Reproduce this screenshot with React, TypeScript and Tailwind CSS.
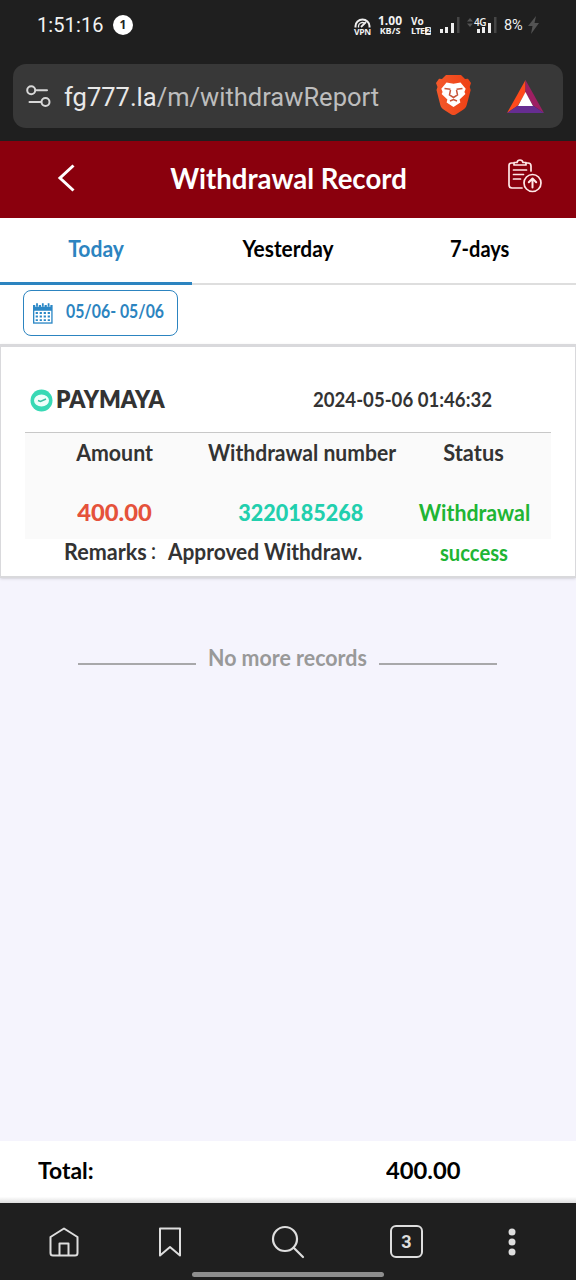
import { useState } from 'react';
import type { ReactNode } from 'react';

const tabs = [
  { label: 'Today', fit: 'scale-x-[0.96]' },
  { label: 'Yesterday', fit: 'scale-x-[0.95]' },
  { label: '7-days', fit: 'scale-x-[0.91]' },
];

const Fit = ({ className = '', children }: { className?: string; children: ReactNode }) => (
  <span className={`inline-block whitespace-nowrap ${className}`}>{children}</span>
);

const Signal = () => (
  <svg width="22" height="18" viewBox="0 0 22 18">
    <rect x="1" y="13" width="3" height="4" fill="#eee" />
    <rect x="6" y="11" width="3" height="6" fill="#eee" />
    <rect x="12" y="7" width="3" height="10" fill="#eee" />
    <rect x="18" y="1" width="2.5" height="16" fill="#464646" />
  </svg>
);

const StatusBar = () => (
  <div className="flex h-[50px] items-center text-[#f2f2f2]">
    <span className="ml-[37px] w-[68px] text-[20px] tracking-[0.1px] whitespace-nowrap font-['Roboto',sans-serif]">
      1:51:16
    </span>
    <span className="ml-[8px] flex size-5 items-center justify-center rounded-full bg-white text-[12px] font-bold text-[#222]">1</span>
    <div className="ml-[221px] flex w-[17px] flex-col items-center pt-[3px]">
      <svg width="17" height="10" viewBox="0 0 17 10" fill="none" stroke="#eee" strokeWidth="2">
        <path d="M1.5 9.5V8a7 6.5 0 0 1 14 0v1.5" />
        <path d="M4.5 9.5V8a4 3.6 0 0 1 6-3" strokeWidth="1.3" />
        <path d="M7 9l5-5" strokeWidth="1.8" />
      </svg>
      <span className="text-[8.5px] font-bold leading-[8px] tracking-[-0.3px]">VPN</span>
    </div>
    <div className="ml-[6px] flex w-[26px] flex-col items-center font-bold">
      <span className="text-[12px] leading-[11px]">1.00</span>
      <span className="text-[9px] leading-[9px] whitespace-nowrap">KB/S</span>
    </div>
    <div className="ml-[8px] flex w-[20px] flex-col pt-[2px] font-bold">
      <span className="text-[10px] leading-[9px]">Vo</span>
      <span className="flex items-center text-[9px] leading-[9px] tracking-[-0.7px]">
        LTE
        <span className="ml-[1px] flex h-[8px] w-[6px] items-center justify-center rounded-[1px] bg-[#eee] text-[7px] leading-none text-[#222]">2</span>
      </span>
    </div>
    <div className="ml-[8px]"><Signal /></div>
    <div className="relative ml-[15px]">
      <Signal />
      <span className="absolute left-[-2px] top-[1px] bg-[#1f1f1f] text-[10px] font-semibold leading-[10px] tracking-[-0.5px]">4G</span>
      <svg className="absolute left-[-9px] top-[2px]" width="6" height="9" viewBox="0 0 6 9" fill="#555">
        <path d="M0 3.5 3 0l3 3.500zM0 5.500 3 9l3-3.500z" />
      </svg>
    </div>
    <span className="ml-[6px] w-[20px] pt-[1px] text-[14.5px] tracking-[-0.2px] font-['Roboto',sans-serif]">8%</span>
    <svg className="ml-[4px]" width="11" height="18" viewBox="0 0 11 18" fill="#535353">
      <path d="M8 0 0 10h4.500L3 18l8-11H6.500z" />
    </svg>
  </div>
);

const BraveLogo = () => (
  <svg width="35" height="41" viewBox="0 0 35 41">
    <defs>
      <linearGradient id="brave">
        <stop offset="0" stopColor="#f4592b" />
        <stop offset="1" stopColor="#ee4014" />
      </linearGradient>
    </defs>
    <path d="M10 1h15l4 4 3-.3 3 4.300-1.300 4 1 3-4 15c-.8 2.600-2 3.600-4 5l-7 4.500q-2.200 1.200-4.400 0l-7-4.500c-2-1.400-3.200-2.400-4-5L.5 16l1-3L0 9l3-4.300L6 5z" fill="url(#brave)" />
    <path d="m10.500 8.500 7 1.300 7-1.300 5.200 6.200-1.300 3.300 1 2-5.800 5.400.8 3-6.900 4.700-6.900-4.700.8-3L5.600 20l1-2-1.300-3.300z" fill="#fff" />
    <path d="M8.500 14.500l6 .7M26.500 14.500l-6 .7M14.500 16l-1 5 4 2.500 4-2.500-1-5M14 27l3.500-1.500L21 27" fill="none" stroke="#c9563a" strokeWidth="1.500" />
  </svg>
);

const BatLogo = () => (
  <svg width="37" height="33" viewBox="0 0 37 33">
    <path d="M18.500 0 0 33l11-7.500 7.500-13z" fill="#ff4a1c" />
    <path d="M18.500 0 37 33l-11-7.500-7.500-13z" fill="#9e1f63" />
    <path d="M0 33h37l-11-7.500H11z" fill="#662d91" />
    <path d="M18.500 12 11 26h15z" fill="#fff" />
  </svg>
);

const AddressBar = () => (
  <div className="mx-[13px] mt-[14px] flex h-16 items-center rounded-[13px] bg-[#383838]">
    <svg className="ml-[13px]" width="25" height="24" viewBox="0 0 25 24" fill="none" stroke="#d8d8d8" strokeWidth="2" strokeLinecap="round">
      <circle cx="5.200" cy="6.200" r="4" />
      <path d="M10 6.200h11M3.500 18h11" />
      <circle cx="19.500" cy="18" r="4" />
    </svg>
    <span className="ml-[13px] w-[316px] pt-[3px] text-[25.500px] whitespace-nowrap text-[#bdbdbd] font-['Roboto',sans-serif]">
      <span className="text-[#e8e8e8]">fg777.la</span>/m/withdrawReport
    </span>
    <div className="ml-[56px] pb-[3px]"><BraveLogo /></div>
    <div className="ml-[36px]"><BatLogo /></div>
  </div>
);

const PageHeader = () => (
  <div className="flex h-[77px] items-center bg-[#8a000d] pb-[4px] text-white">
    <button className="ml-[57px]">
      <svg width="20" height="28" viewBox="0 0 20 28" fill="none" stroke="white" strokeWidth="3">
        <path d="M16.500 1.500 3 14l13.500 12.500" />
      </svg>
    </button>
    <h1 className="ml-[77px] flex w-[268px] justify-center text-[29px] font-bold">
      <Fit className="scale-x-[0.95]">Withdrawal Record</Fit>
    </h1>
    <button className="ml-[85px] pb-[3px]">
      <svg width="36" height="36" viewBox="0 0 36 36" fill="none" stroke="#ffe8e8" strokeWidth="1.700" strokeLinecap="round" strokeLinejoin="round">
        <path d="M6 5H4.500Q2 5 2 7.500V27q0 3 3 3h10M19 5h2q3 0 3 3v5" />
        <path d="M7 7V4.500h3Q10.500 2 13 2t3 2.500h3V7z" />
        <path d="M6.500 12h13M6.500 16.500h10M6.500 21h7" />
        <circle cx="25.500" cy="25" r="8.500" />
        <path d="M25.500 29.500V21M21.800 24.300l3.700-3.800 3.700 3.800" strokeWidth="2" />
      </svg>
    </button>
  </div>
);

const CalendarIcon = () => (
  <svg width="22" height="24" viewBox="0 0 22 24">
    <path d="M0 3h22v21H0z" fill="#2c88c6" />
    <path d="M1.500 9.500h19v13h-19z" fill="#fff" />
    <path d="M4.500 1v4M11 1v4M17.500 1v4" fill="none" stroke="#fff" strokeWidth="4" />
    <path d="M4.500 1v4M11 1v4M17.500 1v4" fill="none" stroke="#2c88c6" strokeWidth="2" />
    <path d="M3 12h16M3 16h16M3 20h16" stroke="#2c88c6" strokeWidth="2.200" strokeDasharray="2.500 2" />
  </svg>
);

const RecordCard = () => (
  <div className="h-[234px] border-x border-b-2 border-t-[3px] border-[#d9d9dc] bg-white px-6 shadow-sm">
    <div className="flex h-[85px] items-center pt-[19px]">
      <svg className="ml-[5px] mt-[3px]" width="23" height="23" viewBox="0 0 23 23">
        <circle cx="11.500" cy="11.500" r="11" fill="#38d9b5" />
        <ellipse cx="11.500" cy="11.500" rx="7.500" ry="6" fill="#effffb" />
        <path d="m8 11.500 2.500 1L16 10" fill="none" stroke="#38bfa2" strokeWidth="1.500" />
      </svg>
      <Fit className="ml-[3px] w-[257px] origin-left text-[25px] font-extrabold text-[#333] scale-x-[0.91]">PAYMAYA</Fit>
      <Fit className="origin-left text-[20px] font-bold text-[#333] scale-x-[0.93]">2024-05-06 01:46:32</Fit>
    </div>
    <div className="grid h-[107px] grid-cols-[179px_193px_154px] grid-rows-[41px_64px] border-t border-[#c8c8c8] bg-[#fafafa] text-center text-[22px] font-bold leading-[40px] text-[#333]">
      <div><Fit className="scale-x-[0.97]">Amount</Fit></div>
      <div><Fit className="scale-x-[0.96]">Withdrawal number</Fit></div>
      <div><Fit className="scale-x-[0.99]">Status</Fit></div>
      <div className="pt-[19px] font-black text-[#e5523b]"><Fit className="scale-x-[1.08]">400.00</Fit></div>
      <div className="pt-[19px] font-black text-[#22cfae]"><Fit className="scale-x-[0.98]">3220185268</Fit></div>
      <div className="relative z-10 pt-[19px] text-[#20b534]">
        <Fit className="scale-x-[0.97]">Withdrawal</Fit>
        <Fit className="-mt-px scale-x-[0.92]">success</Fit>
      </div>
    </div>
    <div className="flex pl-[39px] text-[22px] font-bold leading-[26px] text-[#333]">
      <Fit className="w-[85px] origin-left scale-x-[0.98]">Remarks</Fit>
      <span className="w-[19px] text-[18px] font-normal">：</span>
      <Fit className="origin-left scale-x-[0.95]">Approved Withdraw.</Fit>
    </div>
  </div>
);

const BottomNav = () => (
  <div className="flex h-[77px] flex-col bg-[#1f1f1f]">
    <div className="flex h-[69px] items-center pt-[8px]">
      <svg className="ml-[48px]" width="32" height="32" viewBox="0 0 32 32" fill="none" stroke="#dedede" strokeWidth="2" strokeLinejoin="round">
        <path d="M2.500 11 16 2.500 29.500 11v16q0 2.500-2.500 2.500H5q-2.500 0-2.500-2.500z" />
        <path d="M11.500 29V17.500h9V29" />
      </svg>
      <svg className="ml-[78px]" width="24" height="32" viewBox="0 0 24 32" fill="none" stroke="#dedede" strokeWidth="2" strokeLinejoin="round">
        <path d="M2 2.500h20v27L12 21 2 29.500z" />
      </svg>
      <svg className="ml-[89px]" width="34" height="34" viewBox="0 0 34 34" fill="none" stroke="#dedede" strokeWidth="2.200" strokeLinecap="round">
        <circle cx="14" cy="14" r="12" />
        <path d="m23 23 9 9" />
      </svg>
      <span className="ml-[85px] flex size-[33px] items-center justify-center rounded-[6px] border-2 border-[#dedede] text-[18px] font-bold text-[#dedede] font-['Roboto',sans-serif]">3</span>
      <svg className="ml-[84px]" width="10" height="28" viewBox="0 0 10 28" fill="#dedede">
        <circle cx="5" cy="4" r="3.500" />
        <circle cx="5" cy="14" r="3.500" />
        <circle cx="5" cy="24" r="3.500" />
      </svg>
    </div>
    <div className="mx-auto h-[5px] w-48 rounded-full bg-[#8e8e8e]" />
  </div>
);

const App = () => {
  const [active, setActive] = useState('Today');

  return (
    <div className="flex h-[1280px] w-[576px] flex-col overflow-hidden bg-[#f5f4fd] font-['Lato','Noto_Sans_CJK_SC',sans-serif]">
      <div className="h-[141px] shrink-0 bg-[#1f1f1f] font-['Open_Sans',sans-serif]">
        <StatusBar />
        <AddressBar />
      </div>
      <PageHeader />
      <div className="grid h-[67px] shrink-0 grid-cols-3 bg-white text-[22px] font-bold">
        {tabs.map(tab => (
          <button
            key={tab.label}
            onClick={() => setActive(tab.label)}
            className={`pb-[4px] ${active === tab.label ? 'border-b-[3px] border-[#2c84c0] text-[#2c84c0]' : 'border-b-2 border-[#dedede] text-black'}`}
          >
            <Fit className={tab.fit}>{tab.label}</Fit>
          </button>
        ))}
      </div>
      <div className="h-[59px] shrink-0 bg-white pl-[23px] pt-[5px]">
        <button className="flex h-[46px] w-[155px] items-center rounded-[8px] border-[1.500px] border-[#2c84c0] pl-[9px] text-[#2c84c0]">
          <CalendarIcon />
          <Fit className="ml-[13px] origin-left pb-[3px] text-[18px] font-bold scale-x-[0.88]">05/06- 05/06</Fit>
        </button>
      </div>
      <RecordCard />
      <div className="mt-[62px] mr-[2px] flex items-center justify-center text-[23px] font-bold text-[#999]">
        <span className="mt-[13px] h-[2px] w-[118px] bg-[#a8a8aa]" />
        <span className="flex w-[183px] justify-center"><Fit className="scale-x-[0.93]">No more records</Fit></span>
        <span className="mt-[13px] h-[2px] w-[118px] bg-[#a8a8aa]" />
      </div>
      <div className="mt-auto flex h-[62px] shrink-0 items-center bg-white bg-linear-to-b from-white from-90% to-[#dedede] pb-[3px] pl-[38px] text-[22px] font-bold text-black">
        <Fit className="w-[348px] origin-left scale-x-[1.04]">Total:</Fit>
        <Fit className="origin-left scale-x-[1.08]">400.00</Fit>
      </div>
      <BottomNav />
    </div>
  );
};

export default App;
